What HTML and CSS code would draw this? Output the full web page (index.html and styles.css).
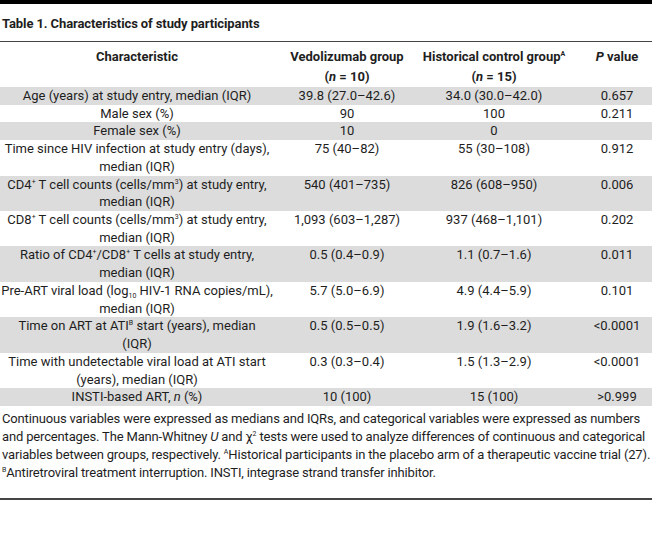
FILE: index.html
```html
<!DOCTYPE html>
<html>
<head>
<meta charset="utf-8">
<link rel="stylesheet" href="styles.css">
</head>
<body>
<div class="wrap">
  <div class="title">Table 1. Characteristics of study participants</div>
  <table class="tbl">
    <colgroup>
      <col class="c1"><col class="c2"><col class="c3"><col class="c4">
    </colgroup>
    <thead>
      <tr>
        <th>Characteristic</th>
        <th>Vedolizumab group<br>(<i>n</i> = 10)</th>
        <th>Historical control group<sup>A</sup><br>(<i>n</i> = 15)</th>
        <th><i>P</i> value</th>
      </tr>
    </thead>
    <tbody>
      <tr class="g"><td>Age (years) at study entry, median (IQR)</td><td>39.8 (27.0–42.6)</td><td>34.0 (30.0–42.0)</td><td>0.657</td></tr>
      <tr><td>Male sex (%)</td><td>90</td><td>100</td><td>0.211</td></tr>
      <tr class="g"><td>Female sex (%)</td><td>10</td><td>0</td><td></td></tr>
      <tr><td>Time since HIV infection at study entry (days),<br>median (IQR)</td><td>75 (40–82)</td><td>55 (30–108)</td><td>0.912</td></tr>
      <tr class="g"><td>CD4<sup>+</sup> T cell counts (cells/mm<sup>3</sup>) at study entry,<br>median (IQR)</td><td>540 (401–735)</td><td>826 (608–950)</td><td>0.006</td></tr>
      <tr><td>CD8<sup>+</sup> T cell counts (cells/mm<sup>3</sup>) at study entry,<br>median (IQR)</td><td>1,093 (603–1,287)</td><td>937 (468–1,101)</td><td>0.202</td></tr>
      <tr class="g"><td>Ratio of CD4<sup>+</sup>/CD8<sup>+</sup> T cells at study entry,<br>median (IQR)</td><td>0.5 (0.4–0.9)</td><td>1.1 (0.7–1.6)</td><td>0.011</td></tr>
      <tr><td>Pre-ART viral load (log<sub>10</sub> HIV-1 RNA copies/mL),<br>median (IQR)</td><td>5.7 (5.0–6.9)</td><td>4.9 (4.4–5.9)</td><td>0.101</td></tr>
      <tr class="g"><td>Time on ART at ATI<sup>B</sup> start (years), median<br>(IQR)</td><td>0.5 (0.5–0.5)</td><td>1.9 (1.6–3.2)</td><td>&lt;0.0001</td></tr>
      <tr><td>Time with undetectable viral load at ATI start<br>(years), median (IQR)</td><td>0.3 (0.3–0.4)</td><td>1.5 (1.3–2.9)</td><td>&lt;0.0001</td></tr>
      <tr class="g"><td>INSTI-based ART, <i>n</i> (%)</td><td>10 (100)</td><td>15 (100)</td><td>&gt;0.999</td></tr>
    </tbody>
  </table>
  <div class="notes">Continuous variables were expressed as medians and IQRs, and categorical variables were expressed as numbers and percentages. The Mann-Whitney <i>U</i> and χ<sup>2</sup> tests were used to analyze differences of continuous and categorical variables between groups, respectively. <sup>A</sup>Historical participants in the placebo arm of a therapeutic vaccine trial (27). <sup>B</sup>Antiretroviral treatment interruption. INSTI, integrase strand transfer inhibitor.</div>
</div>
</body>
</html>
```
FILE: styles.css
```css
html, body {
  margin: 0;
  padding: 0;
  background: #fff;
}
body {
  font-family: Roboto, "Liberation Sans", sans-serif;
  font-size: 13px;
  color: #1e1e1e;
}
.wrap {
  width: 652px;
  border-top: 4px solid #000;
}
.title {
  font-weight: bold;
  font-size: 13px;
  letter-spacing: -0.1px;
  line-height: 18px;
  padding: 11px 0 8px 2px;
  border-bottom: 1px solid #444;
}
.tbl {
  width: 652px;
  border-collapse: collapse;
  table-layout: fixed;
}
.c1 { width: 274px; }
.c2 { width: 146px; }
.c3 { width: 148px; }
.c4 { width: 84px; }
.tbl th {
  font-weight: bold;
  text-align: center;
  vertical-align: top;
  line-height: 20px;
  padding: 5px 0 0;
  white-space: nowrap;
}
.tbl th:last-child, .tbl td:last-child { padding-left: 14px; }
.tbl td {
  text-align: center;
  vertical-align: top;
  line-height: 17.7px;
  padding: 0;
  white-space: nowrap;
}
.tbl tr.g td { background: #dcdcdc; }
sup, sub {
  font-size: 7px;
  line-height: 1;
}
sup { vertical-align: 5px; }
sub { vertical-align: -3px; }
.notes {
  padding: 4px 0 16px 2px;
  line-height: 18px;
  letter-spacing: -0.16px;
  border-bottom: 2px solid #444;
}
```
